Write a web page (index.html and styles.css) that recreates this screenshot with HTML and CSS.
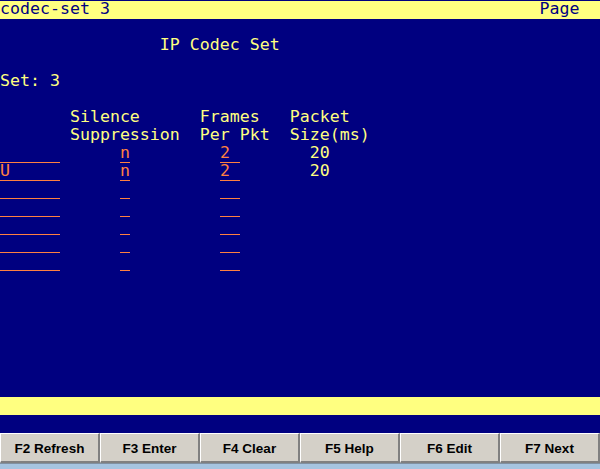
FILE: index.html
```html
<!DOCTYPE html>
<html>
<head>
<meta charset="utf-8">
<title>codec-set 3</title>
<link rel="stylesheet" href="styles.css">
</head>
<body>
<div class="screen">
<div class="row bar">codec-set 3                                           Page</div>
<div class="row"></div>
<div class="row">                IP Codec Set</div>
<div class="row"></div>
<div class="row">Set: 3</div>
<div class="row"></div>
<div class="row">       Silence      Frames   Packet</div>
<div class="row">       Suppression  Per Pkt  Size(ms)</div>
<div class="row"><span class="f w6"></span>      <span class="f w1">n</span>         <span class="f w2">2</span>       20</div>
<div class="row"><span class="f w6">U</span>      <span class="f w1">n</span>         <span class="f w2">2</span>       20</div>
<div class="row"><span class="f w6"></span>      <span class="f w1"></span>         <span class="f w2"></span></div>
<div class="row"><span class="f w6"></span>      <span class="f w1"></span>         <span class="f w2"></span></div>
<div class="row"><span class="f w6"></span>      <span class="f w1"></span>         <span class="f w2"></span></div>
<div class="row"><span class="f w6"></span>      <span class="f w1"></span>         <span class="f w2"></span></div>
<div class="row"><span class="f w6"></span>      <span class="f w1"></span>         <span class="f w2"></span></div>
<div class="row"></div>
<div class="row"></div>
<div class="row"></div>
<div class="row"></div>
<div class="row"></div>
<div class="row"></div>
<div class="row"></div>
<div class="row bar"></div>
<div class="row"></div>
</div>
<div class="fkeys">
<div class="key">F2 Refresh</div>
<div class="key">F3 Enter</div>
<div class="key">F4 Clear</div>
<div class="key">F5 Help</div>
<div class="key">F6 Edit</div>
<div class="key">F7 Next</div>
</div>
<div class="strip"></div>
</body>
</html>
```
FILE: styles.css
```css
html, body {
  margin: 0;
  padding: 0;
}
body {
  width: 600px;
  height: 469px;
  overflow: hidden;
  background: #a6c4e0;
}
.screen {
  background: #000080;
  padding-top: 1px;
  height: 432px;
  font-family: "DejaVu Sans Mono", monospace;
  font-size: 16.6px;
  color: #ffff80;
}
.row {
  height: 18px;
  line-height: 16px;
  white-space: pre;
  overflow: visible;
}
.bar {
  background: #ffff80;
  color: #000080;
}
.f {
  display: inline-block;
  vertical-align: top;
  height: 18px;
  box-sizing: border-box;
  border-bottom: 1px solid #ff8040;
  color: #ff8040;
  line-height: 16px;
}
.w6 { width: 60px; }
.w1 { width: 10px; }
.w2 { width: 20px; }
.fkeys {
  display: flex;
  height: 30px;
}
.key {
  width: 100px;
  box-sizing: border-box;
  background: #d4d0c8;
  border-top: 1px solid #ffffff;
  border-left: 1px solid #ffffff;
  border-right: 2px solid #808080;
  border-bottom: 2px solid #808080;
  display: flex;
  align-items: center;
  justify-content: center;
  font-family: "Liberation Sans", Arial, sans-serif;
  font-weight: bold;
  font-size: 13.5px;
  color: #000;
  padding-top: 1px;
}
.strip {
  height: 6px;
  background: #a6c4e0;
  border-top: 1px solid #8090a0;
  box-sizing: border-box;
}
```
